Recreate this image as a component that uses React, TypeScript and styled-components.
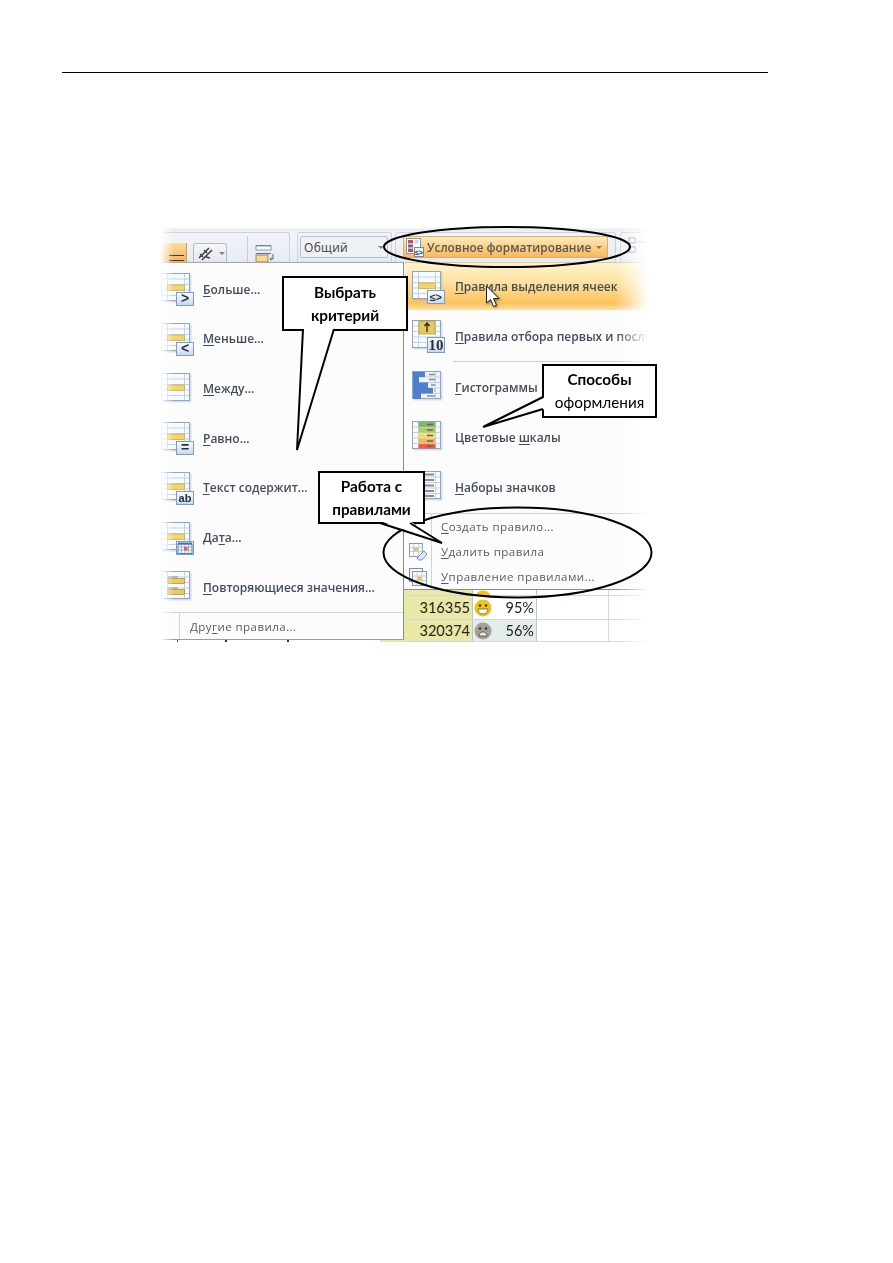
import React from 'react'
import styled, { createGlobalStyle } from 'styled-components'

const GlobalStyle = createGlobalStyle`
  html, body {
    margin: 0;
    padding: 0;
    background: #fff;
  }
  body {
    font-family: "Open Sans", "Liberation Sans", sans-serif;
  }
`

const Page = styled.div`
  width: 893px;
  height: 1263px;
  overflow: hidden;
  padding-top: 72px;
  box-sizing: border-box;
`

const HeaderRule = styled.div`
  width: 706px;
  height: 1.4px;
  margin-left: 62px;
  background: #000;
`

const Figure = styled.div`
  position: relative;
  width: 500px;
  height: 420px;
  margin: 149px 0 0 160px;
  overflow: hidden;
`

const Shot = styled.div`
  display: flex;
  flex-direction: column;
  filter: blur(0.5px);
`

const Ribbon = styled.div`
  display: flex;
  align-items: flex-start;
  height: 40px;
  padding-top: 10px;
  box-sizing: border-box;
  background: linear-gradient(#fff 0, #fff 5px, #e9eaec 8px, #f3f5f8 10px, #e8edf4 100%);
`

const RibbonGroup = styled.div<{ $ml?: number; $w: number }>`
  display: flex;
  align-items: flex-end;
  width: ${(p) => p.$w}px;
  height: 30px;
  margin-left: ${(p) => p.$ml ?? 0}px;
  box-sizing: border-box;
  border: 1px solid #ccd3dd;
  border-bottom: 0;
  border-radius: 3px 3px 0 0;
  background: linear-gradient(#f2f4f8, #e6ebf3);
`

const OrangeButton = styled.div`
  position: relative;
  width: 26px;
  height: 19px;
  margin-left: -1px;
  background: linear-gradient(#fbdc9a, #f7b060);
  border-right: 1px solid #d79a50;
  &::after {
    content: '';
    position: absolute;
    left: 9px;
    right: 2px;
    bottom: 1px;
    height: 4px;
    border-top: 1px solid #3a3a3a;
    border-bottom: 1px solid #3a3a3a;
  }
`

const SmallButton = styled.div`
  display: flex;
  align-items: center;
  gap: 1px;
  width: 34px;
  height: 19px;
  margin-left: 6px;
  padding-left: 2px;
  box-sizing: border-box;
  background: linear-gradient(#f6f7fa, #e4e8ee);
  border: 1px solid #b3bbc8;
  border-bottom: 0;
  border-radius: 3px 3px 0 0;
`

const Caret = styled.span<{ $color?: string }>`
  display: inline-block;
  width: 0;
  height: 0;
  border-left: 3px solid transparent;
  border-right: 3px solid transparent;
  border-top: 3px solid ${(p) => p.$color ?? '#7a8290'};
`

const GroupDivider = styled.div`
  width: 1px;
  height: 26px;
  margin: 0 6px 0 20px;
  background: #c6ccd6;
`

const NumberCombo = styled.div`
  display: flex;
  align-items: center;
  justify-content: space-between;
  width: 88px;
  height: 22px;
  margin: 0 0 4px 2px;
  padding: 0 3px;
  box-sizing: border-box;
  background: #eef1f5;
  border: 1px solid #b8c0cc;
  border-radius: 2px;
  font-size: 12px;
  letter-spacing: 0.3px;
  color: #3d3d3d;
`

const FormatButton = styled.div`
  display: flex;
  align-items: center;
  width: 205px;
  height: 22px;
  margin: 0 0 4px 7px;
  padding: 0 5px 0 2px;
  box-sizing: border-box;
  gap: 3px;
  background: linear-gradient(#fdebbd, #fbd088 50%, #f9b75e);
  border: 1px solid #dcae6c;
  border-radius: 2px;
  font-size: 11.8px;
  font-weight: 600;
  color: #5a5650;
`

const ButtonLabel = styled.span`
  flex: 1;
  white-space: nowrap;
`

const Menus = styled.div`
  display: flex;
  height: 380px;
`

const LeftColumn = styled.div`
  display: flex;
  flex-direction: column;
  width: 244px;
`

const LeftMenu = styled.div`
  display: flex;
  flex-direction: column;
  height: 378px;
  padding-top: 1px;
  box-sizing: border-box;
  background: #fcfcfc;
  border-top: 1px solid #a8a8a8;
  border-right: 1px solid #8c8c8c;
  border-bottom: 1px solid #9c9c9c;
  box-shadow: 1px 1px 2px rgba(0, 0, 0, 0.25);
`

const LeftItem = styled.div`
  display: flex;
  align-items: center;
  flex: none;
  height: 49.7px;
  gap: 9px;
`

const MenuLabel = styled.span`
  font-size: 12px;
  font-weight: 600;
  white-space: nowrap;
  color: #434d5a;
`

const FooterItem = styled.div`
  display: flex;
  flex: 1;
  align-items: center;
  border-top: 1px solid #d4d4d4;
`

const FooterGutter = styled.div`
  width: 20px;
  height: 100%;
  border-right: 1px solid #d4d4d4;
  box-sizing: border-box;
`

const PlainLabel = styled.span`
  margin-left: 10px;
  font-size: 11.5px;
  letter-spacing: 0.45px;
  white-space: nowrap;
  color: #555d68;
`

const StrayTicks = styled.div`
  flex: 1;
  background:
    linear-gradient(#444, #444) 17px 0 / 1px 100% no-repeat,
    linear-gradient(#333, #333) 65px 0 / 2px 100% no-repeat,
    linear-gradient(#333, #333) 127px 0 / 2px 100% no-repeat,
    linear-gradient(90deg, #fff 0, #fff 90%, #e6e6a8 90%);
`

const RightColumn = styled.div`
  display: flex;
  flex-direction: column;
  width: 248px;
`

const RightMenu = styled.div`
  display: flex;
  flex-direction: column;
  height: 329px;
  box-sizing: border-box;
  background: #fcfcfc;
  border-bottom: 1px solid #8c8c8c;
`

const RightItem = styled.div<{ $active?: boolean }>`
  display: flex;
  align-items: center;
  flex: none;
  height: 48px;
  margin-bottom: 2px;
  padding-left: 7px;
  gap: 10px;
  box-sizing: border-box;
  ${(p) =>
    p.$active &&
    `
    margin-left: 1px;
    padding-left: 6px;
    background: linear-gradient(#fff3cc, #fde2a0 40%, #fbc25c 85%, #fce0a6);
    border-top: 1px solid #e8c88c;
  `}
`

const RightSeparator = styled.div`
  flex: none;
  height: 1px;
  margin: -1px 0 1px 49px;
  background: #d0d0d0;
`

const RulesSection = styled.div`
  flex: 1;
  display: flex;
  border-top: 1px solid #d0d0d0;
`

const RulesGutter = styled.div`
  display: flex;
  flex-direction: column;
  align-items: center;
  width: 28px;
  padding-top: 25px;
  box-sizing: border-box;
  border-right: 1px solid #d4d4d4;
`

const GutterSlot = styled.div`
  display: flex;
  align-items: center;
  height: 25px;
`

const RulesList = styled.div`
  display: flex;
  flex-direction: column;
  flex: 1;
`

const RuleRow = styled.div`
  display: flex;
  align-items: center;
  height: 25px;
  font-size: 11.5px;
  letter-spacing: 0.45px;
  white-space: nowrap;
  color: #555d68;
  padding-left: 9px;
`

const Sheet = styled.div`
  display: flex;
  flex-direction: column;
  flex: 1;
  background: #fff;
`

const SheetRow = styled.div<{ $h: number }>`
  display: grid;
  grid-template-columns: 69px 64px 72px 1fr;
  height: ${(p) => p.$h}px;
  overflow: hidden;
  border-bottom: 1px solid #d0d7e5;
  box-sizing: border-box;
  align-items: stretch;
`

const SheetCell = styled.div<{ $bg?: string }>`
  display: flex;
  align-items: center;
  justify-content: flex-end;
  padding: 0 2px 0 0;
  box-sizing: border-box;
  background: ${(p) => p.$bg ?? '#fff'};
  border-right: 1px solid #b8c6d4;
  font-family: Lato, "Open Sans", sans-serif;
  font-size: 14.5px;
  color: #222;
`

const ScoreCell = styled(SheetCell)`
  justify-content: space-between;
  padding-left: 1px;
`

const ClippedCell = styled(SheetCell)`
  align-items: flex-end;
  line-height: 13px;
`

const ClippedScoreCell = styled(ScoreCell)`
  align-items: flex-end;
  line-height: 13px;
`

const EmptyCell = styled.div`
  border-right: 1px solid #d0d7e5;
`

const LeftFade = styled.div`
  position: absolute;
  left: 0;
  top: 0;
  bottom: 0;
  width: 14px;
  background: linear-gradient(90deg, #fff, rgba(255, 255, 255, 0));
`

const RightFade = styled.div`
  position: absolute;
  left: 455px;
  top: 0;
  bottom: 0;
  width: 45px;
  background: linear-gradient(90deg, rgba(255, 255, 255, 0), #fff 75%);
`

const DrawLayer = styled.svg`
  position: absolute;
  left: 0;
  top: 0;
  width: 500px;
  height: 420px;
  overflow: visible;
  pointer-events: none;
  filter: blur(0.3px);
`

const CursorMark = styled.svg`
  position: absolute;
  left: 325px;
  top: 63px;
  filter: drop-shadow(1px 1px 1px rgba(0, 0, 0, 0.45));
`

const Callout = styled.div<{ $x: number; $y: number; $w: number; $h: number }>`
  position: absolute;
  left: ${(p) => p.$x}px;
  top: ${(p) => p.$y}px;
  width: ${(p) => p.$w}px;
  height: ${(p) => p.$h}px;
  display: flex;
  flex-direction: column;
  align-items: center;
  justify-content: center;
  box-sizing: border-box;
  background: #fff;
  border: 2px solid #000;
  font-family: Lato, "Open Sans", sans-serif;
  font-size: 15.3px;
  line-height: 23px;
  color: #000;
  white-space: nowrap;
  filter: blur(0.25px);
`

const Strong = styled.span`
  font-weight: 700;
`

const Letter = styled.span`
  text-decoration: underline;
  text-underline-offset: 2px;
`

const MiniIconBox = styled.svg`
  flex: none;
  display: block;
`

type Bar = 'single' | 'double' | 'top' | 'bars' | 'scale' | 'lines'

function SheetIcon({ bar = 'single', badge, id }: { bar?: Bar; badge?: string; id: string }) {
  const body = bar === 'bars' ? '#eef3fb' : '#f7fafe'
  const isTen = badge === '10'
  return (
    <MiniIconBox width="34" height="36" viewBox="0 0 34 36">
      <defs>
        <linearGradient id={id} x1="0" y1="0" x2="0" y2="1">
          <stop offset="0" stopColor="#fbfdff" />
          <stop offset="1" stopColor="#c7d8ee" />
        </linearGradient>
      </defs>
      <rect x="1.5" y="2.5" width="29" height="28" fill="#93a7c0" opacity="0.35" transform="translate(1 1)" />
      <rect x="1.5" y="2.5" width="28" height="27" fill={body} stroke="#8da6c8" />
      <path d="M7.5 3v26M24.5 3v26M2 8h27M2 13.5h27M2 19h27M2 24.5h27" stroke="#c3d1e4" strokeWidth="1" />
      {bar === 'single' && <rect x="7.5" y="14" width="17" height="5.5" fill="#f4d668" stroke="#b9a24c" strokeWidth="0.6" />}
      {bar === 'double' && (
        <>
          <path d="M8 8h10M8 19h10" stroke="#8b8b8b" />
          <rect x="8" y="9.5" width="16.5" height="5" fill="#e9cc5c" stroke="#8f7c30" strokeWidth="0.6" />
          <rect x="8" y="20.5" width="16.5" height="5" fill="#e9cc5c" stroke="#8f7c30" strokeWidth="0.6" />
        </>
      )}
      {bar === 'top' && (
        <>
          <rect x="8" y="3" width="16" height="13" fill="#e7c95a" stroke="#a28a35" strokeWidth="0.6" />
          <path d="M16 5v9M13.5 8l2.5-3 2.5 3" stroke="#222" strokeWidth="1.3" fill="none" />
        </>
      )}
      {bar === 'bars' && (
        <>
          <path d="M2 3h12v5h-6v5.5h9v5.5h5v5.5h-12v5.5H2z" fill="#4f7fca" />
          <path d="M18 5.500h6M18 10.500h6M20 16h4M24 21.500h-1M16 27h8" stroke="#8c8c8c" strokeWidth="1.600" />
        </>
      )}
      {bar === 'scale' && (
        <>
          <rect x="7.500" y="3" width="17" height="5" fill="#7fb765" />
          <rect x="7.500" y="8.500" width="17" height="5" fill="#a9cc6e" />
          <rect x="7.500" y="14" width="17" height="5" fill="#efe06e" />
          <rect x="7.500" y="19.500" width="17" height="5" fill="#f4b35e" />
          <rect x="7.500" y="25" width="17" height="4.500" fill="#e8604c" />
          <path d="M16 5.500h6M16 11h6M16 16.500h6M16 22h6M16 27.200h6" stroke="#666" strokeWidth="1.300" />
        </>
      )}
      {bar === 'lines' && <path d="M9 5.500h14M9 11h14M9 16.500h14M9 22h14M9 27h14" stroke="#8a8a8a" strokeWidth="2" />}
      {badge && (
        <>
          <rect x="16.500" y={isTen ? 19.5 : 21.5} width="17" height={isTen ? 15 : 13} fill={`url(#${id})`} stroke="#7f9bc0" />
          {badge === 'cal' ? (
            <>
              <rect x="18" y="24" width="14" height="9.500" fill="#f4f7fb" stroke="#5a7fb4" />
              <path d="M18 23.500h14" stroke="#4a6ea8" strokeWidth="2" />
              <path d="M21.500 24v9M25 24v9M28.500 24v9M18 27h14M18 30h14" stroke="#7e9cc6" strokeWidth="0.700" />
              <rect x="24" y="27" width="3.500" height="3.500" fill="#e2574a" />
            </>
          ) : (
            <text
              x="25"
              y={badge === '≤>' ? 31.5 : 32}
              textAnchor="middle"
              fontFamily={isTen ? '"Liberation Serif", serif' : '"Liberation Sans", sans-serif'}
              fontWeight={700}
              fontSize={isTen ? 15 : badge === 'ab' ? 11 : badge === '≤>' ? 10.5 : 14}
              fill="#2b2f38"
            >
              {badge}
            </text>
          )}
        </>
      )}
    </MiniIconBox>
  )
}

function FormatIcon() {
  return (
    <MiniIconBox width="18" height="19" viewBox="0 0 18 19">
      <rect x="0.500" y="0.500" width="14" height="15" fill="#fff" stroke="#7f9bc0" />
      <rect x="2" y="2" width="5" height="3.500" fill="#d8493c" />
      <rect x="2" y="6.500" width="5" height="3" fill="#3f6fc0" />
      <rect x="2" y="10.500" width="5" height="3.500" fill="#d8493c" />
      <rect x="8.500" y="2" width="4" height="3.500" fill="#c7d6ea" />
      <rect x="8.500" y="9.500" width="9" height="9" fill="#eef3fa" stroke="#6e89ae" />
      <text x="13" y="17" textAnchor="middle" fontFamily='"Liberation Sans", sans-serif' fontSize="7" fontWeight={700} fill="#333">
        ≤&gt;
      </text>
    </MiniIconBox>
  )
}

function BrushIcon() {
  return (
    <MiniIconBox width="18" height="18" viewBox="0 0 18 18">
      <rect x="0.500" y="0.500" width="13" height="13" fill="#fdfdfd" stroke="#7f9bc0" />
      <path d="M0.500 4.500h13M0.500 8.500h13M4.500 1v12M9.500 1v12" stroke="#c3d1e4" />
      <rect x="5" y="5" width="4" height="3" fill="#ecc14f" />
      <path d="M8 15l7-7 3 3-5 6H10z" fill="#dfe8f3" stroke="#7f93ad" />
    </MiniIconBox>
  )
}

function ManageIcon() {
  return (
    <MiniIconBox width="18" height="18" viewBox="0 0 18 18">
      <rect x="0.500" y="0.500" width="13" height="13" fill="#f3f6fb" stroke="#7f8ea3" />
      <rect x="3.500" y="3.500" width="14" height="14" fill="#f6f8fc" stroke="#7f9bc0" />
      <path d="M3.500 8h14M3.500 12.500h14M8 4v13M13 4v13" stroke="#c3d1e4" />
      <rect x="8.500" y="8.500" width="4" height="4" fill="#ecc14f" />
    </MiniIconBox>
  )
}

function Face({ happy }: { happy?: boolean }) {
  return (
    <MiniIconBox width="18" height="18" viewBox="0 0 18 18">
      <circle cx="9" cy="9" r="8.500" fill={happy ? '#efc21c' : '#a3a096'} />
      <circle cx="6" cy="6.500" r="1.300" fill="#3a3a30" />
      <circle cx="12" cy="6.500" r="1.300" fill="#3a3a30" />
      {happy ? (
        <path d="M4 10h10c0 3-2 5-5 5s-5-2-5-5z" fill="#fff" stroke="#5a4a10" strokeWidth="0.700" />
      ) : (
        <path d="M5 14c0-3 2-4 4-4s4 1 4 4z" fill="#eee" stroke="#3a3a30" strokeWidth="0.700" />
      )}
    </MiniIconBox>
  )
}

const leftItems: { bar?: Bar; badge?: string; before: string; key: string; after: string }[] = [
  { badge: '>', before: '', key: 'Б', after: 'ольше...' },
  { badge: '<', before: '', key: 'М', after: 'еньше...' },
  { before: '', key: 'М', after: 'ежду...' },
  { badge: '=', before: '', key: 'Р', after: 'авно...' },
  { badge: 'ab', before: '', key: 'Т', after: 'екст содержит...' },
  { badge: 'cal', before: 'Да', key: 'т', after: 'а...' },
  { bar: 'double', before: '', key: 'П', after: 'овторяющиеся значения...' },
]

const rightItems: { bar?: Bar; badge?: string; before: string; key: string; after: string; active?: boolean; rule?: boolean }[] = [
  { badge: '≤>', before: '', key: 'П', after: 'равила выделения ячеек', active: true },
  { bar: 'top', badge: '10', before: '', key: 'П', after: 'равила отбора первых и последних', rule: true },
  { bar: 'bars', before: '', key: 'Г', after: 'истограммы' },
  { bar: 'scale', before: 'Цветовые ', key: 'ш', after: 'калы' },
  { bar: 'lines', before: '', key: 'Н', after: 'аборы значков' },
]

export default function App() {
  return (
    <Page>
      <GlobalStyle />
      <HeaderRule />
      <Figure>
        <Shot>
          <Ribbon>
            <RibbonGroup $w={130}>
              <OrangeButton />
              <SmallButton>
                <svg width="22" height="17" viewBox="0 0 22 17">
                  <path d="M3 13L13 3M6 15L16 5M8 5l3 3M4 9l3 3M10 12l4 1" stroke="#3c3c3c" strokeWidth="1.500" fill="none" />
                </svg>
                <Caret />
              </SmallButton>
              <GroupDivider />
              <svg width="22" height="18" viewBox="0 0 22 18">
                <path d="M2 1.500h15M2 9.500h15" stroke="#5a6f8c" />
                <rect x="2" y="2" width="15" height="4" fill="#fff" stroke="#8898ae" />
                <rect x="2" y="11" width="12" height="7" fill="#f7d99a" stroke="#a08550" />
                <path d="M19 10v5h-3M17.500 13.500L16 15l1.500 1.500" stroke="#4a6a96" fill="none" />
              </svg>
            </RibbonGroup>
            <RibbonGroup $ml={7} $w={95}>
              <NumberCombo>
                Общий
                <Caret />
              </NumberCombo>
            </RibbonGroup>
            <RibbonGroup $ml={3} $w={221}>
              <FormatButton>
                <FormatIcon />
                <ButtonLabel>Условное форматирование</ButtonLabel>
                <Caret $color="#8a7a60" />
              </FormatButton>
            </RibbonGroup>
            <RibbonGroup $ml={4} $w={40}>
              <svg width="20" height="24" viewBox="0 0 20 24" style={{ marginLeft: 7, marginBottom: 4 }}>
                <rect x="1" y="4" width="6" height="5" fill="#fff" stroke="#6e7f96" />
                <rect x="1" y="13" width="6" height="5" fill="#fff" stroke="#6e7f96" />
                <path d="M9 8h9" stroke="#8fa3bf" />
              </svg>
            </RibbonGroup>
          </Ribbon>
          <Menus>
            <LeftColumn>
              <LeftMenu>
                {leftItems.map((it, i) => (
                  <LeftItem key={i}>
                    <SheetIcon id={`l${i}`} bar={it.bar} badge={it.badge} />
                    <MenuLabel>
                      {it.before}
                      <Letter>{it.key}</Letter>
                      {it.after}
                    </MenuLabel>
                  </LeftItem>
                ))}
                <FooterItem>
                  <FooterGutter />
                  <PlainLabel>
                    Дру<Letter>г</Letter>ие правила...
                  </PlainLabel>
                </FooterItem>
              </LeftMenu>
              <StrayTicks />
            </LeftColumn>
            <RightColumn>
              <RightMenu>
                {rightItems.map((it, i) => (
                  <React.Fragment key={i}>
                    <RightItem $active={it.active}>
                      <SheetIcon id={`r${i}`} bar={it.bar} badge={it.badge} />
                      <MenuLabel>
                        {it.before}
                        <Letter>{it.key}</Letter>
                        {it.after}
                      </MenuLabel>
                    </RightItem>
                    {it.rule && <RightSeparator />}
                  </React.Fragment>
                ))}
                <RulesSection>
                  <RulesGutter>
                    <GutterSlot>
                      <BrushIcon />
                    </GutterSlot>
                    <GutterSlot>
                      <ManageIcon />
                    </GutterSlot>
                  </RulesGutter>
                  <RulesList>
                    <RuleRow>
                      <span>
                        <Letter>С</Letter>оздать правило...
                      </span>
                    </RuleRow>
                    <RuleRow>
                      <span>
                        <Letter>У</Letter>далить правила
                      </span>
                    </RuleRow>
                    <RuleRow>
                      <span>
                        <Letter>У</Letter>правление правилами...
                      </span>
                    </RuleRow>
                  </RulesList>
                </RulesSection>
              </RightMenu>
              <Sheet>
                <SheetRow $h={6}>
                  <ClippedCell $bg="#e8e9a6">303411</ClippedCell>
                  <ClippedScoreCell>
                    <Face happy />
                    <span>96%</span>
                  </ClippedScoreCell>
                  <EmptyCell />
                  <EmptyCell />
                </SheetRow>
                <SheetRow $h={24}>
                  <SheetCell $bg="#e8e9a6">316355</SheetCell>
                  <ScoreCell>
                    <Face happy />
                    <span>95%</span>
                  </ScoreCell>
                  <EmptyCell />
                  <EmptyCell />
                </SheetRow>
                <SheetRow $h={22}>
                  <SheetCell $bg="#e8e9a6">320374</SheetCell>
                  <ScoreCell $bg="#e5ecec">
                    <Face />
                    <span>56%</span>
                  </ScoreCell>
                  <EmptyCell />
                  <EmptyCell />
                </SheetRow>
              </Sheet>
            </RightColumn>
          </Menus>
        </Shot>
        <LeftFade />
        <RightFade />
        <CursorMark width="18" height="24" viewBox="0 0 18 24">
          <path d="M1.500 1v17l4-3.500 3 7 3-1.300-3-6.700h5.500z" fill="#fff" stroke="#222" strokeWidth="1" />
        </CursorMark>
        <DrawLayer viewBox="0 0 500 420">
          <ellipse cx="347" cy="25" rx="123" ry="20" fill="none" stroke="#000" strokeWidth="2" />
          <ellipse cx="357.500" cy="330.500" rx="134" ry="45" fill="none" stroke="#000" strokeWidth="2" />
        </DrawLayer>
        <Callout $x={122} $y={54} $w={126} $h={55}>
          <Strong>Выбрать</Strong>
          <Strong>критерий</Strong>
        </Callout>
        <Callout $x={382} $y={142} $w={115} $h={54}>
          <Strong>Способы</Strong>
          <span>оформления</span>
        </Callout>
        <Callout $x={158} $y={249} $w={107} $h={53}>
          <Strong>Работа с</Strong>
          <Strong>правилами</Strong>
        </Callout>
        <DrawLayer viewBox="0 0 500 420">
          <polygon points="143,106 174,106 137,228" fill="#fff" />
          <polyline points="143,107 137,228 174,107" fill="none" stroke="#000" strokeWidth="2" />
          <polygon points="385,175 385,187 323,205" fill="#fff" />
          <polyline points="383,175 323,205 383,187" fill="none" stroke="#000" strokeWidth="2" />
          <polygon points="220,299 250,299 282,321" fill="#fff" />
          <polyline points="220,301 282,321 250,301" fill="none" stroke="#000" strokeWidth="2" />
        </DrawLayer>
      </Figure>
    </Page>
  )
}
